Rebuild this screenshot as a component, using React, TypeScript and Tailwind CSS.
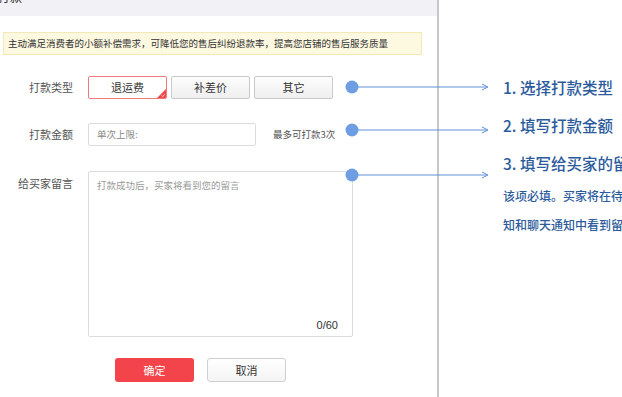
const font = "font-['Noto_Sans_CJK_SC','Noto_Sans',sans-serif]"

const types = ['退运费', '补差价', '其它']

const notes = [
  { y: 87 },
  { y: 130 },
  { y: 175 },
]

function Annotations() {
  return (
    <svg className="absolute inset-0 pointer-events-none" width={622} height={397}>
      {notes.map((n) => (
        <g key={n.y}>
          <line x1={352} y1={n.y} x2={487} y2={n.y} stroke="#5f90d8" strokeWidth={1} />
          <path d={`M482 ${n.y - 3}L488 ${n.y}L482 ${n.y + 3}`} fill="none" stroke="#5f90d8" strokeWidth={1} />
          <circle cx={352} cy={n.y} r={6.5} fill="#6d9de2" />
        </g>
      ))}
    </svg>
  )
}

export default function App() {
  return (
    <div className={`relative w-[622px] h-[397px] overflow-hidden bg-white flex ${font}`}>
      {/* Dialog */}
      <div className="w-[437px] shrink-0 flex flex-col">
        <div className="h-[16px] bg-[#f2f2f6] overflow-hidden">
          <div className="-mt-[11px] -ml-[2px] text-[12px] leading-[16px] text-[#333]">打款</div>
        </div>

        {/* Notice */}
        <div className="mt-[16px] ml-[3px] w-[419px] h-[23px] bg-[#fdf8e0] border border-[#f3e8b8] flex items-center pl-[4px] text-[9.5px] text-[#333] whitespace-nowrap">
          主动满足消费者的小额补偿需求，可降低您的售后纠纷退款率，提高您店铺的售后服务质量
        </div>

        <div className="flex flex-col pt-[21px]">
          {/* Type */}
          <div className="flex items-center h-[23px]">
            <div className="w-[73px] text-right text-[11px] text-[#555]">打款类型</div>
            <div className="ml-[15px] flex gap-[4px]">
              {types.map((t, i) => (
                <button
                  key={t}
                  className={`relative w-[79px] h-[23px] rounded-[2px] text-[11px] text-[#333] overflow-hidden ${
                    i === 0
                      ? 'border border-[#f07a7a] bg-white'
                      : 'border border-[#c9c9c9] bg-gradient-to-b from-[#fdfdfd] to-[#efefef]'
                  }`}
                >
                  {t}
                  {i === 0 && (
                    <svg className="absolute right-0 bottom-0" width={9} height={9} viewBox="0 0 9 9">
                      <path d="M9 0V9H0Z" fill="#f04848" />
                      <path d="M4.5 6.5L5.8 7.6L7.8 5.2" fill="none" stroke="#fff" strokeWidth={0.7} />
                    </svg>
                  )}
                </button>
              ))}
            </div>
          </div>

          {/* Amount */}
          <div className="flex items-center h-[23px] mt-[24px]">
            <div className="w-[73px] text-right text-[11px] text-[#555]">打款金额</div>
            <div className="ml-[15px] w-[168px] h-[23px] border border-[#dcdcdc] rounded-[2px] flex items-center pl-[8px] text-[9.5px] text-[#888]">
              单次上限:
            </div>
            <div className="ml-[17px] text-[9.5px] text-[#555]">最多可打款3次</div>
          </div>

          {/* Message */}
          <div className="flex mt-[25px]">
            <div className="w-[73px] text-right text-[11px] text-[#555] pt-[4px]">给买家留言</div>
            <div className="ml-[15px] relative w-[265px] h-[166px] border border-[#dcdcdc] rounded-[2px]">
              <div className="pl-[8px] pt-[6px] text-[9.5px] text-[#999]">打款成功后，买家将看到您的留言</div>
              <div className="absolute right-[14px] bottom-[3px] text-[11px] text-[#333] font-['Liberation_Sans',sans-serif]">
                0/60
              </div>
            </div>
          </div>

          {/* Actions */}
          <div className="flex gap-[13px] mt-[21px] pl-[115px]">
            <button className="w-[79px] h-[24px] rounded-[3px] bg-[#f2444a] text-white text-[11px]">确定</button>
            <button className="w-[79px] h-[24px] rounded-[3px] border border-[#cfcfcf] bg-gradient-to-b from-white to-[#f4f4f4] text-[#333] text-[11px]">
              取消
            </button>
          </div>
        </div>
      </div>

      <div className="w-[2px] shrink-0 bg-[#c7c7c7]" />

      {/* Annotation text */}
      <div className="flex-1 min-w-0 pl-[64px] flex flex-col text-[#2c5b9c] font-medium whitespace-nowrap">
        <div className="mt-[77px] text-[15.5px] leading-[20px]">1. 选择打款类型</div>
        <div className="mt-[18px] text-[15.5px] leading-[20px]">2. 填写打款金额</div>
        <div className="mt-[18px] text-[15.5px] leading-[20px]">3. 填写给买家的留言</div>
        <div className="mt-[8px] text-[12px] leading-[29px]">
          <div>该项必填。买家将在待办通</div>
          <div>知和聊天通知中看到留言</div>
        </div>
      </div>

      <Annotations />
    </div>
  )
}
